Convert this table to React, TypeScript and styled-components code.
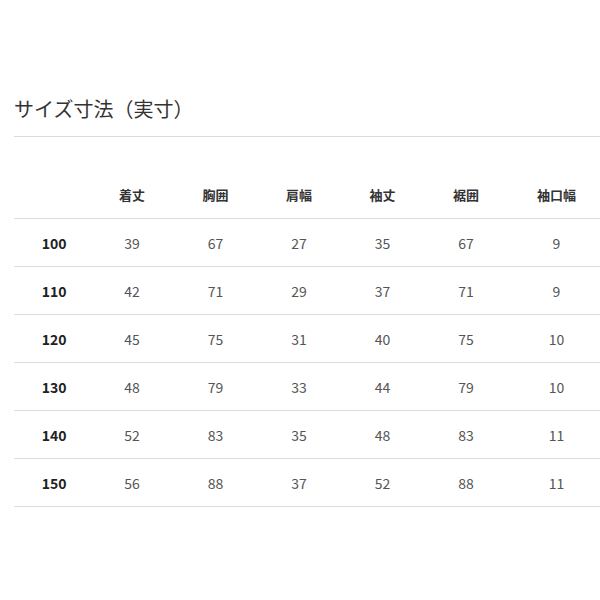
import React from "react";
import styled, { createGlobalStyle } from "styled-components";

const GlobalStyle = createGlobalStyle`
  html, body {
    margin: 0;
    padding: 0;
    background: #ffffff;
  }
  body {
    font-family: "Noto Sans CJK JP", "Noto Sans", sans-serif;
    overflow: hidden;
  }
`;

const Page = styled.div`
  width: 600px;
  height: 600px;
  padding: 94px 0 0 14px;
  box-sizing: border-box;
  overflow: hidden;
`;

const Title = styled.h2`
  margin: 0;
  font-size: 20px;
  line-height: 30px;
  font-weight: 400;
  color: #333333;
  padding-bottom: 12px;
  border-bottom: 1px solid #dcdcdc;
`;

const Table = styled.div`
  margin-top: 34px;
  width: 600px;
`;

const Row = styled.div`
  display: grid;
  grid-template-columns: 76.25px repeat(5, 83.5px) 97.5px;
  height: 48px;
  box-sizing: border-box;
  border-bottom: 1px solid #dcdcdc;
  align-items: center;
`;

const HeadCell = styled.div`
  text-align: center;
  font-size: 13px;
  font-weight: 700;
  color: #333333;
`;

const SizeCell = styled.div`
  text-align: center;
  font-size: 14px;
  font-weight: 700;
  color: #222222;
  padding-left: 4px;
`;

const Cell = styled.div`
  text-align: center;
  font-size: 14px;
  font-weight: 400;
  color: #555555;
`;

const headers = ["着丈", "胸囲", "肩幅", "袖丈", "裾囲", "袖口幅"];

const rows: [string, number[]][] = [
  ["100", [39, 67, 27, 35, 67, 9]],
  ["110", [42, 71, 29, 37, 71, 9]],
  ["120", [45, 75, 31, 40, 75, 10]],
  ["130", [48, 79, 33, 44, 79, 10]],
  ["140", [52, 83, 35, 48, 83, 11]],
  ["150", [56, 88, 37, 52, 88, 11]],
];

export default function App() {
  return (
    <>
      <GlobalStyle />
      <Page>
        <Title>サイズ寸法（実寸）</Title>
        <Table>
          <Row>
            <HeadCell />
            {headers.map((h) => (
              <HeadCell key={h}>{h}</HeadCell>
            ))}
          </Row>
          {rows.map(([size, vals]) => (
            <Row key={size}>
              <SizeCell>{size}</SizeCell>
              {vals.map((v, i) => (
                <Cell key={i}>{v}</Cell>
              ))}
            </Row>
          ))}
        </Table>
      </Page>
    </>
  );
}
